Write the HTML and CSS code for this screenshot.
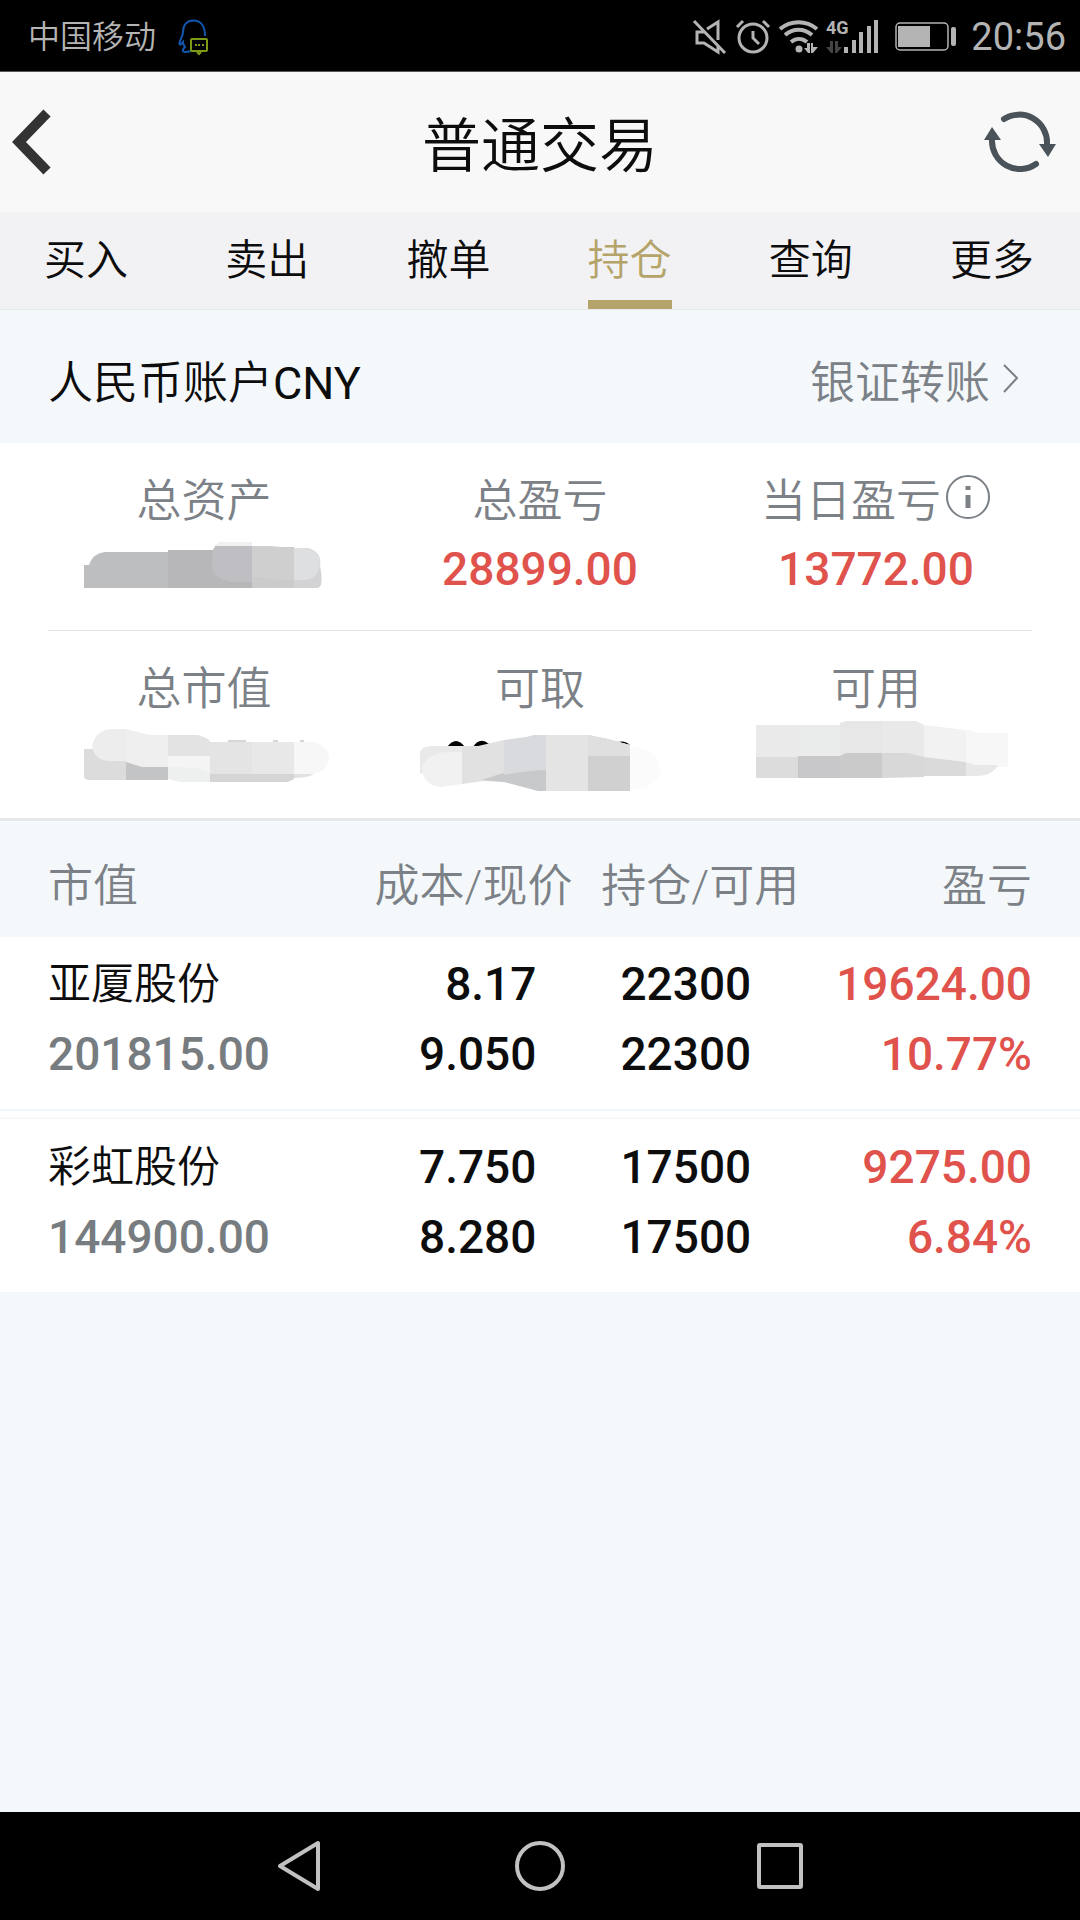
FILE: index.html
```html
<!DOCTYPE html>
<html lang="zh-CN">
<head>
<meta charset="utf-8">
<meta name="viewport" content="width=device-width, initial-scale=1">
<title>普通交易</title>
<link rel="stylesheet" href="styles.css">
</head>
<body>
<div class="status-bar">
  <span class="carrier">中国移动</span>
  <svg class="icon-message" viewBox="0 0 32 36" width="32" height="36" fill="none" aria-hidden="true">
    <path d="M27 17C27 6 22 1.500 15.500 1.500S5 6 5 13C5 18 1.500 20 1.500 25C2 27 4 24 5 23C5 26 6.500 27 7 28C2 33 6 34 13 32" stroke="#1257ae" stroke-width="2"/>
    <rect x="13" y="20" width="16" height="12" rx="1" fill="#000" stroke="#7d9a16" stroke-width="2"/>
    <path d="M19 33l2 2 2-2" stroke="#7d9a16" stroke-width="2"/>
    <path d="M17 25h2v2h-2zM20 25h2v2h-2zM24 25h2v2h-2z" fill="#7d9a16"/>
  </svg>
  <div class="indicators">
    <svg viewBox="0 0 34 34" width="34" height="34" fill="none" stroke="#b4b4b4" stroke-width="3" aria-hidden="true">
      <path d="M1 1l31 32M14 9l11-7v18M12 12H4v11h7l14 9v-6"/>
    </svg>
    <svg viewBox="0 0 34 34" width="34" height="34" fill="none" stroke="#b4b4b4" stroke-width="3" aria-hidden="true">
      <circle cx="17" cy="18" r="14"/><path d="M1 7l6-6M33 7l-6-6M17 11v7l6 6"/>
    </svg>
    <svg viewBox="0 0 38 34" width="38" height="34" fill="none" stroke="#b4b4b4" stroke-width="4" aria-hidden="true">
      <path d="M1 9c11-9 26-9 37 0M6 15c8-7 19-7 27 0M12 22c5-4 11-4 16 0"/>
      <circle cx="20" cy="29" r="3.500" fill="#b4b4b4" stroke="none"/>
      <path d="M31 23v10h-2l-4-5h3v-5zM34 23v4h5l-5 6h-2V23z" fill="#b4b4b4" stroke="none"/>
    </svg>
    <svg viewBox="0 0 54 34" width="54" height="34" aria-hidden="true">
      <text x="0" y="14" class="net-type">4G</text>
      <path d="M7 21v12H5l-5-6h4v-6zM9 21h3v6h4l-5 6H9z" fill="#444"/>
      <path d="M18 27h4v6h-4zM26 20h4v13h-4zM33 12h4v21h-4zM41 6h4v27h-4zM48 0h4v33h-4z" fill="#b4b4b4"/>
    </svg>
    <svg class="battery" viewBox="0 0 62 30" width="62" height="30" aria-hidden="true">
      <rect x="1" y="1" width="52" height="27" rx="4" fill="none" stroke="#b4b4b4" stroke-width="1.500"/>
      <rect x="3" y="4" width="32" height="21" fill="#b4b4b4"/>
      <rect x="56" y="5" width="5" height="19" rx="2" fill="#b4b4b4"/>
    </svg>
    <span class="clock">20:56</span>
  </div>
</div>

<header class="title-bar">
  <button class="icon-button icon-back" type="button" aria-label="返回">
    <svg viewBox="0 0 40 66" width="40" height="66" fill="none" stroke="#333" stroke-width="10"><path d="M35 4L7 33l28 29"/></svg>
  </button>
  <h1 class="title">普通交易</h1>
  <button class="icon-button" type="button" aria-label="刷新">
    <svg viewBox="0 0 72 64" width="72" height="64" fill="none" stroke="#4a5359" stroke-width="6" stroke-linecap="round">
      <path d="M20 9A28 28 0 0 1 63 34M52 54A28 28 0 0 1 8 30"/>
      <path d="M55 34h17l-8 13zM0 30h17L8 17z" fill="#4a5359" stroke="none"/>
    </svg>
  </button>
</header>

<nav class="tabs" aria-label="交易">
  <button class="tab" type="button">买入</button>
  <button class="tab" type="button">卖出</button>
  <button class="tab" type="button">撤单</button>
  <button class="tab tab-active" type="button" aria-current="page">持仓</button>
  <button class="tab" type="button">查询</button>
  <button class="tab" type="button">更多</button>
</nav>

<main class="content">
  <div class="account">
    <h2 class="account-name">人民币账户<span class="currency">CNY</span></h2>
    <a class="transfer" href="#">银证转账<svg viewBox="0 0 18 30" width="18" height="30" fill="none" stroke="#7b8186" stroke-width="2" aria-hidden="true"><path d="M2 0l13 13L2 27"/></svg></a>
  </div>

  <section class="summary">
    <div class="summary-row">
      <div class="stat">
        <span class="label">总资产</span>
        <svg class="masked" viewBox="36 537 336 64" width="336" height="64" role="img" aria-label="已隐藏">
          <path d="M84 588v-23h5q4-12 16-13h63v36z" fill="#bdbec0"/>
          <path d="M168 550h84v38h-84z" fill="#b7b7ba"/>
          <path d="M252 547h42v41h-42z" fill="#cbcbcb"/>
          <path d="M294 548h14q14 4 12 18q4 20-2 22h-24z" fill="#d3d3d6"/>
          <path d="M213 550q3-7 9-8h30v40h-20q-20-3-20-18z" fill="#bebec3"/>
          <path d="M252 542v4h-38q4-4 9-4z" fill="#f1f1f1"/>
          <path d="M252 546h18l24 2v32q-25 0-42-4z" fill="#cfcfcf"/>
          <path d="M294 548h10q16 2 16 16q-1 14-15 16h-11z" fill="#dedfe1"/>
        </svg>
      </div>
      <div class="stat">
        <span class="label">总盈亏</span>
        <span class="number gain">28899.00</span>
      </div>
      <div class="stat">
        <span class="label">当日盈亏<button class="info" type="button" aria-label="说明"><svg viewBox="0 0 46 46" width="46" height="46" fill="none" stroke="#7b8186" stroke-width="2"><circle cx="23" cy="23" r="21"/><path d="M23 12v4M23 21v13" stroke-width="5"/></svg></button></span>
        <span class="number gain">13772.00</span>
      </div>
    </div>
    <hr class="divider">
    <div class="summary-row">
      <div class="stat">
        <span class="label">总市值</span>
        <svg class="masked" viewBox="36 725 336 64" width="336" height="64" role="img" aria-label="已隐藏">
          <path d="M84 749h42v31H88l-4-2z" fill="#dcdcdc"/>
          <path d="M126 756h42v24h-42z" fill="#c3c4c6"/>
          <path d="M168 756h42v26h-30l-12-3z" fill="#edf0ee"/>
          <path d="M210 756h84v23l-6 3h-78z" fill="#d5d5d6"/>
          <path d="M294 774h20q-6 4-20 4z" fill="#e1e1e2"/>
          <path d="M92 746q4-17 21-17h13v32h-17q-15-1-17-15z" fill="#ededed"/>
          <path d="M126 729l24 6h18v32h-26l-16-5z" fill="#efefef"/>
          <path d="M168 735h30q10 3 12 6v15h-42z" fill="#e3e3e3"/>
          <path d="M168 756h42v17l-12-5-30-1z" fill="#f3f4f3"/>
          <path d="M210 742h42v32h-42z" fill="#e4e4e4"/>
          <path d="M252 742h42v32h-42z" fill="#e8e8e8"/>
          <path d="M294 742h20q14 4 15 16q-1 12-15 16h-20z" fill="#f7f7f7"/>
          <path d="M228 741h18M273 741h5M300 741h4" stroke="#a8adb0"/>
        </svg>
      </div>
      <div class="stat">
        <span class="label">可取</span>
        <svg class="masked" viewBox="372 725 336 64" width="336" height="64" role="img" aria-label="已隐藏">
          <path d="M447 747q9-12 18 0zM473 747q7-11 16-3l-10 3zM618 742q7-2 12 3" fill="#000"/>
          <path d="M420 774v-22q2-6 12-6h30v10z" fill="#e9e9e9"/>
          <path d="M462 746h16l26-6v42l-20-1-22 3z" fill="#e1e1e1"/>
          <path d="M482 780q14-5 22-7l42-4v22h-8l-34-9z" fill="#c8c9cb"/>
          <path d="M504 740l22-3 8-2h12v35q-24 1-42 5z" fill="#d8dade"/>
          <path d="M546 735h42v56h-42z" fill="#e4e4e5"/>
          <path d="M588 735l20 4 22 6v46h-42z" fill="#d0d0d1"/>
          <path d="M588 735l20 4 22 6v11h-42z" fill="#dfdfdf"/>
          <path d="M630 746q30 4 30 24-1 18-30 20z" fill="#fafbfa"/>
          <path d="M462 752v32l-21 3q-16-1-19-17 2-17 27-18z" fill="#f1f1f1"/>
        </svg>
      </div>
      <div class="stat">
        <span class="label">可用</span>
        <svg class="masked" viewBox="708 725 336 64" width="336" height="64" role="img" aria-label="已隐藏">
          <path d="M756 725h42v32h-42z" fill="#eaeaea"/><path d="M798 725h42v32h-42z" fill="#e9eceb"/>
          <path d="M840 723l6-2h36v36h-42z" fill="#e7e7e7"/><path d="M882 721h34l8 4v36l-42-4z" fill="#e9e9e9"/>
          <path d="M924 725l42 5v32l-42-5z" fill="#f2f2f2"/><path d="M966 729l12 4h30v34h-42z" fill="#f7f7f7"/>
          <path d="M756 757h42v21h-42z" fill="#dcdcdc"/><path d="M798 756h42v22h-42z" fill="#c8c8cb"/>
          <path d="M840 756l6-3h36v25h-42z" fill="#cacaca"/><path d="M882 753h26l16 4v20l-42 1z" fill="#d8d8d8"/>
          <path d="M924 757l42 5v14h-42z" fill="#dadada"/><path d="M966 762l8 3h24q-6 11-22 11h-10z" fill="#e8e8e8"/>
        </svg>
      </div>
    </div>
  </section>

  <table class="holdings">
    <colgroup><col class="col-name"><col class="col-cost"><col class="col-amount"><col></colgroup>
    <thead>
      <tr><th scope="col">市值</th><th scope="col">成本/现价</th><th scope="col">持仓/可用</th><th scope="col">盈亏</th></tr>
    </thead>
    <tbody>
      <tr>
        <td><span class="line stock">亚厦股份</span><span class="line muted">201815.00</span></td>
        <td><span class="line">8.17</span><span class="line">9.050</span></td>
        <td><span class="line">22300</span><span class="line">22300</span></td>
        <td class="gain"><span class="line">19624.00</span><span class="line">10.77%</span></td>
      </tr>
      <tr>
        <td><span class="line stock">彩虹股份</span><span class="line muted">144900.00</span></td>
        <td><span class="line">7.750</span><span class="line">8.280</span></td>
        <td><span class="line">17500</span><span class="line">17500</span></td>
        <td class="gain"><span class="line">9275.00</span><span class="line">6.84%</span></td>
      </tr>
    </tbody>
  </table>
</main>

<nav class="system-nav" aria-label="系统导航">
  <button type="button" aria-label="返回"><svg viewBox="0 0 50 54" width="50" height="54"><path d="M5 27L43 4v46z"/></svg></button>
  <button type="button" aria-label="主屏幕"><svg viewBox="0 0 50 54" width="50" height="54"><circle cx="25" cy="27" r="23"/></svg></button>
  <button type="button" aria-label="最近任务"><svg viewBox="0 0 50 54" width="50" height="54"><rect x="4" y="6" width="42" height="42" rx="1"/></svg></button>
</nav>
</body>
</html>
```
FILE: styles.css
```css
* { box-sizing: border-box; }

body {
  margin: 0;
  min-height: 100vh;
  display: flex;
  flex-direction: column;
  background: #f4f8fb;
  color: #0d0d0d;
  font-family: Roboto, "Noto Sans CJK SC", sans-serif;
  font-weight: 350;
}

button {
  margin: 0;
  padding: 0;
  border: 0;
  background: none;
  color: inherit;
  font: inherit;
}

svg { display: block; flex: none; overflow: visible; }
h1, h2 { margin: 0; font-weight: inherit; }

.status-bar {
  display: flex;
  align-items: center;
  height: 72px;
  padding: 2px 14px 0 28px;
  background: #000;
  border-bottom: 1px solid #555;
  color: #b4b4b4;
}
.carrier { font-size: 32px; line-height: 44px; }
.icon-message { margin-left: 22px; }
.indicators { display: flex; align-items: center; gap: 9px; margin-left: auto; }
.battery { margin-left: 6px; }
.net-type { font: bold 18px "Liberation Sans Narrow", Roboto, sans-serif; fill: #b4b4b4; }
.clock { margin-left: 5px; font-size: 38px; font-weight: 400; }

.title-bar {
  display: flex;
  align-items: center;
  justify-content: space-between;
  height: 140px;
  padding: 0 24px 0 12px;
  background: #f8f8f8;
}
.icon-button { display: flex; width: 72px; }
.icon-back { width: 84px; }
.title { padding-top: 10px; font-size: 59px; line-height: 80px; }

.tabs {
  display: flex;
  justify-content: space-between;
  padding: 0 46px 0 44px;
  background: #f2f2f5;
  border-bottom: 1px solid #e6e8eb;
}
.tab {
  width: 84px;
  height: 97px;
  border-bottom: 9px solid transparent;
  font-size: 42px;
  white-space: nowrap;
}
.tab-active { border-color: #b5a469; color: #b5a469; }

.content { flex: 1; }

.account {
  display: flex;
  align-items: center;
  justify-content: space-between;
  height: 133px;
  padding: 6px 60px 0 48px;
  font-size: 45px;
}
.account-name { font-size: 45px; }
.currency { font-weight: 400; }
.transfer {
  display: flex;
  align-items: center;
  gap: 12px;
  color: #7b8186;
  text-decoration: none;
}

.summary { background: #fff; border-bottom: 3px solid #e6e8ec; }
.summary-row {
  display: grid;
  grid-template-columns: repeat(3, 1fr);
  height: 187px;
  margin: 0 36px;
  padding-top: 24px;
}
.divider { height: 1px; margin: 0 48px; border: 0; background: #e2e2e4; }
.stat { display: flex; flex-direction: column; align-items: center; gap: 10px; }
.label {
  display: flex;
  align-items: center;
  height: 60px;
  color: #7b8186;
  font-size: 45px;
}
.info { margin-left: 4px; }
.number, .line {
  display: block;
  height: 64px;
  line-height: 64px;
  font-size: 46px;
  font-weight: 500;
}
.gain { color: #e0524c; }

.holdings {
  width: 100%;
  table-layout: fixed;
  border-collapse: collapse;
  text-align: right;
}
.col-name { width: 30%; }
.col-cost { width: 23%; }
.col-amount { width: 21%; }
.holdings th {
  height: 116px;
  padding: 6px 0 0;
  color: #7b8186;
  font-size: 45px;
  font-weight: 350;
  white-space: nowrap;
}
.holdings td { padding: 15px 0 23px; background: #fff; }
.holdings th:first-child, .holdings td:first-child { padding-left: 48px; text-align: left; }
.holdings td:nth-child(2) { padding-right: 36px; }
.holdings td:nth-child(3) { padding-right: 48px; }
.holdings th:last-child, .holdings td:last-child { padding-right: 48px; }
.holdings tr + tr td {
  padding-top: 26px;
  background: linear-gradient(#f2f7fb 2px, #fff 2px, #fff 8px, #f6f8fa 8px, #f6f8fa 10px, #fff 10px);
}
.line + .line { margin-top: 6px; }
.stock { font-size: 43px; font-weight: 350; }
.muted { color: #777c80; }

.system-nav {
  display: flex;
  justify-content: center;
  align-items: center;
  gap: 190px;
  height: 108px;
  background: #000;
}
.system-nav svg { fill: none; stroke: #c1c1c1; stroke-width: 4; stroke-linejoin: round; }
```
